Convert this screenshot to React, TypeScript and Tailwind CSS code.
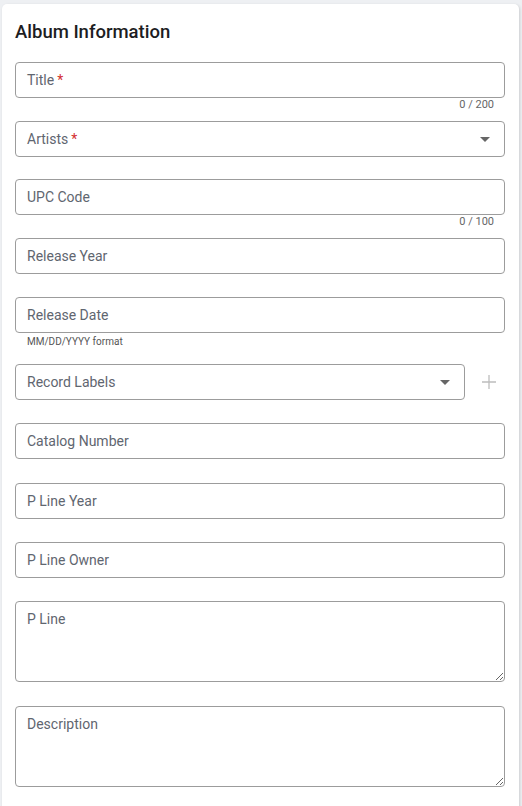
import React from "react";

const font = { fontFamily: "Roboto, 'Liberation Sans', sans-serif" };

function Box({ children, className = "" }: { children: React.ReactNode; className?: string }) {
  return (
    <div className={`h-[36px] border border-[#9c9c9c] rounded-[4px] flex items-center pl-[11px] pr-[14px] text-[14px] text-[#5f6670] ${className}`}>
      {children}
    </div>
  );
}

function Arrow() {
  return (
    <svg width="10" height="5" viewBox="0 0 10 5" className="ml-auto">
      <path d="M0 0 L10 0 L5 5 Z" fill="#666" />
    </svg>
  );
}

function Block({ children, helper, helperLeft, h = "h-[59px]" }: { children: React.ReactNode; helper?: string; helperLeft?: string; h?: string }) {
  return (
    <div className={h}>
      {children}
      {helper && <div className="text-right pr-[11px] text-[11px] leading-[13px] text-[#666]">{helper}</div>}
      {helperLeft && <div className="pl-[12px] mt-[3px] text-[10px] leading-[12px] text-[#555]">{helperLeft}</div>}
    </div>
  );
}

function Area({ label }: { label: string }) {
  return (
    <textarea
      placeholder={label}
      className="block w-full h-[81px] border border-[#9c9c9c] rounded-[4px] px-[11px] pt-[7px] text-[14px] leading-[20px] text-[#333] placeholder:text-[#5f6670] outline-none"
      style={font}
    />
  );
}

export default function App() {
  return (
    <div className="min-h-[806px] bg-[#eef0f3] pt-[4px] pl-[2px] overflow-hidden" style={font}>
      <div className="w-[517px] bg-white rounded-[5px] shadow-[1px_1px_3px_rgba(0,0,0,0.15)] pl-[13px] pr-[14px] pt-[16px] pb-[20px] min-h-[820px]">
        <h2 className="text-[18.5px] leading-[24px] font-medium text-[#1d1d1f] mb-[18px]">Album Information</h2>
        <Block helper="0 / 200">
          <Box>
            Title<span className="text-[#d32f2f] ml-[3px]">*</span>
          </Box>
        </Block>
        <Block h="h-[58px]">
          <Box>
            Artists<span className="text-[#d32f2f] ml-[3px]">*</span>
            <Arrow />
          </Box>
        </Block>
        <Block helper="0 / 100">
          <Box>UPC Code</Box>
        </Block>
        <Block>
          <Box>Release Year</Box>
        </Block>
        <Block helperLeft="MM/DD/YYYY format" h="h-[67px]">
          <Box>Release Date</Box>
        </Block>
        <Block>
          <div className="flex items-center">
            <Box className="w-[450px]">
              Record Labels
              <Arrow />
            </Box>
            <div className="flex-1 flex justify-center pl-[8px]">
              <svg width="14" height="14" viewBox="0 0 14 14">
                <path d="M7 0 V14 M0 7 H14" stroke="#bdbdbd" strokeWidth="1.3" />
              </svg>
            </div>
          </div>
        </Block>
        <Block h="h-[60px]">
          <Box>Catalog Number</Box>
        </Block>
        <Block>
          <Box>P Line Year</Box>
        </Block>
        <Block>
          <Box>P Line Owner</Box>
        </Block>
        <div className="h-[105px]">
          <Area label="P Line" />
        </div>
        <Area label="Description" />
      </div>
    </div>
  );
}
